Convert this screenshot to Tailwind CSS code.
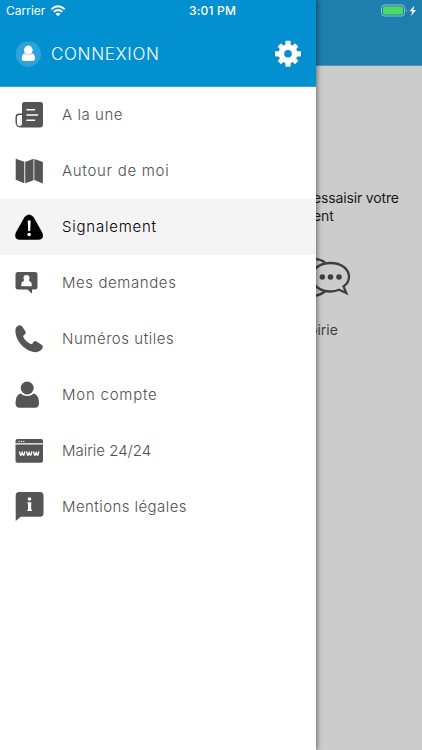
<!DOCTYPE html>
<html lang="fr">
<head>
<meta charset="utf-8">
<title>Menu</title>
<script src="https://cdn.jsdelivr.net/npm/@tailwindcss/browser@4"></script>
</head>
<body class="font-['Inter','Open_Sans',sans-serif]">
<div class="relative h-[750px] w-[422px] overflow-hidden bg-[#cccccc]">

  <!-- Page behind the drawer -->
  <main class="h-full">
    <div class="h-[66px] border-b border-[#4795b9] bg-[#1e7ead]"></div>
    <div class="flex flex-col items-start pt-[123px] pl-[311px] text-[14px] leading-[18px] text-[#1a1a1a]">
      <p class="ml-[2px] whitespace-nowrap tracking-[-0.15px]">essaisir votre<br>ent</p>
      <svg class="mt-[30px] h-[44px] w-[44px]" viewBox="311 255 44 44" fill="none" stroke="#3f3f3f" stroke-width="2.3">
        <path d="M312 259.500c5-1 9 0 13 3M312 296c5 0 9-1.500 13-4.500"/>
        <path d="M343.500 286.500c3.500-2.500 5.500-5.500 5.500-9.500 0-8-7.500-14-18.500-14s-18.500 6-18.500 14 7.500 14.500 18.500 14.500c3.500 0 6-.5 8.500-1.700l7.300 3.200z" stroke-linejoin="miter"/>
        <g fill="#3f3f3f" stroke="none"><circle cx="322.300" cy="277" r="2.800"/><circle cx="330.500" cy="277" r="2.800"/><circle cx="339" cy="277" r="2.800"/></g>
      </svg>
      <p class="-ml-[2px] mt-[22px] text-[#3f3f3f]">oirie</p>
    </div>
  </main>

  <!-- Drawer -->
  <aside class="absolute inset-y-0 left-0 w-[316px] bg-white shadow-[1px_0_5px_rgba(0,0,0,0.5)]">
    <header class="flex h-[87px] items-end border-b border-[#3aa4d5] bg-[#0290d0] px-4 pb-[18px] text-white">
      <svg class="h-[28px] w-[26px]" viewBox="0 0 26 28"><circle cx="12.300" cy="14" r="12.700" fill="#2ea3da"/><ellipse cx="12.300" cy="10.200" rx="4.300" ry="4.700" fill="#fff"/><path fill="#fff" d="M8.500 13.500q3.800 3.300 7.600 0c2.200.3 2.900 2.600 2.900 5 0 1.600-.7 2.400-2.200 2.400H8c-1.500 0-2.200-.8-2.200-2.400 0-2.400.6-4.700 2.700-5z"/></svg>
      <span class="ml-[9px] text-[17px] leading-[28px] font-light tracking-[0.65px]">CONNEXION</span>
      <svg class="ml-auto mr-[-1px] h-[28px] w-[26px]" viewBox="-13 -13 26 28"><g fill="#fff" transform="translate(0 .8)"><circle r="9.600"/><g id="teeth"><rect x="-2.600" y="-13" width="5.200" height="26" rx=".8"/><rect x="-13" y="-2.600" width="26" height="5.200" rx=".8"/></g><use href="#teeth" transform="rotate(45) scale(.95)"/></g><circle cy=".8" r="3.800" fill="#0290d0"/></svg>
    </header>

    <nav class="text-[15px] font-light text-[#515151]">
      <a class="flex h-14 items-center pl-[15px]">
        <svg class="h-8 w-8" viewBox="0 0 32 32" fill="#555"><path d="M7 5.500Q7 3 9.500 3h16Q28 3 28 5.500v20q0 3-3 3H6Q.5 28.500.5 23v-5Q.5 14.500 4 14.500h3zM7 16H4.500Q2 16 2 18.500V24q0 3 2.500 3T7 24z" fill-rule="evenodd"/><path d="M12 10.700h7.500M12 16h10.500M12 21.300h7.500" stroke="#fff" stroke-width="1.600" stroke-linecap="round"/></svg>
        <span class="ml-[15px] pt-px tracking-[0.55px]">A la une</span>
      </a>
      <a class="flex h-14 items-center pl-[15px]">
        <svg class="h-8 w-8" viewBox="0 0 32 32" fill="#555"><path d="M.7 3.800l8.600 3v21.500l-8.600-3.500zM10.200 6.800l4-1.300v21.300l-4 1.500zM14 5.600l4.500-1.800v21.500L14 27zM19.300 4l8.600 3v21.500l-8.600-3.500z"/></svg>
        <span class="ml-[15px] pt-px tracking-[0.72px]">Autour de moi</span>
      </a>
      <a class="flex h-14 items-center bg-[#f4f4f4] pl-[15px] text-black">
        <svg class="h-8 w-8" viewBox="0 0 32 32"><path d="M9.600 6Q14 .8 18.500 6l8.700 15.500q2.600 7-4 7.200H5Q-1.500 28.500.8 21.500z"/><path fill="#fff" d="M12.700 9.500h3l-.5 10.500h-2z"/><circle cx="14.200" cy="23.500" r="1.800" fill="#fff"/></svg>
        <span class="ml-[15px] pt-px tracking-[0.77px]">Signalement</span>
      </a>
      <a class="flex h-14 items-center pl-[15px]">
        <svg class="h-8 w-8" viewBox="0 0 32 32" fill="#555"><path d="M3 5h17q2.500 0 2.500 2.500V20q0 2.500-2.500 2.500h-3v4.200l-4.500-4.200H3Q.5 22.500.5 20V7.500Q.5 5 3 5z"/><circle cx="11.500" cy="11" r="3" fill="#fff"/><path fill="#fff" d="M9.200 12.500h4.600q.2 2 2.200 2.500.8 1 .8 4.200H6.200q0-3.200.8-4.200 2-.5 2.200-2.500z"/></svg>
        <span class="ml-[15px] pt-px tracking-[0.58px]">Mes demandes</span>
      </a>
      <a class="flex h-14 items-center pl-[15px]">
        <svg class="h-8 w-8" viewBox="0 0 32 32" fill="#555"><path d="M1.500 4Q4.500.7 7 3.300l3.400 5Q11.500 10.800 8 13q1 3.800 5.800 7 1.500.8 3.200 1.200 2-4 4.500-2.800l5 3.300q2.700 2 0 4.800c-3 3-7 3.500-12 1.300C7.500 24.500 2 18 .8 11.200.2 8 .2 5.500 1.500 4z"/></svg>
        <span class="ml-[15px] pt-px tracking-[0.54px]">Numéros utiles</span>
      </a>
      <a class="flex h-14 items-center pl-[15px]">
        <svg class="h-8 w-8" viewBox="0 0 32 32" fill="#555"><circle cx="12.200" cy="9" r="6.500"/><path d="M5.500 14.500Q12.200 19.500 19 14.500q5 1.500 5 9.500 0 4.800-4 4.800H4.500Q.5 28.800.5 24 .5 16 5.500 14.500z"/></svg>
        <span class="ml-[15px] pt-px tracking-[0.77px]">Mon compte</span>
      </a>
      <a class="flex h-14 items-center pl-[15px]">
        <svg class="h-8 w-8" viewBox="0 0 32 32" fill="#555"><path d="M.5 8.300V6Q.5 4 2.500 4H26q2 0 2 2v2.300zM.5 9.600H28v16.200q0 2-2 2H2.500q-2 0-2-2z"/><g fill="#fff"><circle cx="4" cy="6.500" r=".7"/><circle cx="6.400" cy="6.500" r=".7"/><circle cx="8.800" cy="6.500" r=".7"/></g><path d="M4.500 16.500l1 3.500h.7l1-2.500 1 2.500h.7l1-3.500M11.500 16.500l1 3.500h.7l1-2.500 1 2.500h.7l1-3.500M18.500 16.500l1 3.500h.7l1-2.500 1 2.500h.7l1-3.500" fill="none" stroke="#fff" stroke-width="1.300"/></svg>
        <span class="ml-[15px] pt-px">Mairie 24/24</span>
      </a>
      <a class="flex h-14 items-center pl-[15px]">
        <svg class="h-8 w-8" viewBox="0 0 32 32" fill="#555"><path d="M4 1h21q3.500 0 3.500 3.500v18q0 3.300-3.500 3.300H5.800L.7 30V4.500Q.7 1 4 1z"/><circle cx="14.500" cy="8" r="1.800" fill="#fff"/><path fill="#fff" d="M12.300 11.300h3.900v7.500h.7v1.200h-4.600v-1.200h.7v-6.200h-.7z"/></svg>
        <span class="ml-[15px] pt-px tracking-[0.43px]">Mentions légales</span>
      </a>
    </nav>
  </aside>

  <!-- Status bar -->
  <div class="absolute inset-x-0 top-0 flex h-[22px] items-center text-[12px] text-white">
    <span class="ml-[6px] w-[40px]">Carrier</span>
    <svg class="ml-[4px] h-[12px] w-[16px]" viewBox="0 0 16 12" fill="none" stroke="#fff" stroke-width="1.900"><path d="M1.300 4.300Q8-1.700 14.700 4.300M3.700 6.900Q8 3 12.300 6.900"/><path d="M5.500 8.800Q8 6.700 10.500 8.800L8 11.200z" fill="#fff" stroke="none"/></svg>
    <span class="ml-[123px] w-[50px] whitespace-nowrap font-medium tracking-[0.2px]">3:01 PM</span>
    <svg class="ml-auto mr-[4px] h-[14px] w-[38px]" viewBox="0 0 38 14"><rect x="1.500" y="1" width="23" height="11" rx="2.500" fill="none" stroke="#8abfd9"/><rect x="3" y="2.500" width="20" height="8" rx="1" fill="#4cd964"/><path d="M26 4.500q1.500 2 0 4z" fill="#8abfd9"/><path d="M34.500 1.500L29.500 7.300h2.800L31 12l5-6h-2.800z" fill="#fff"/></svg>
  </div>
</div>
</body>
</html>
